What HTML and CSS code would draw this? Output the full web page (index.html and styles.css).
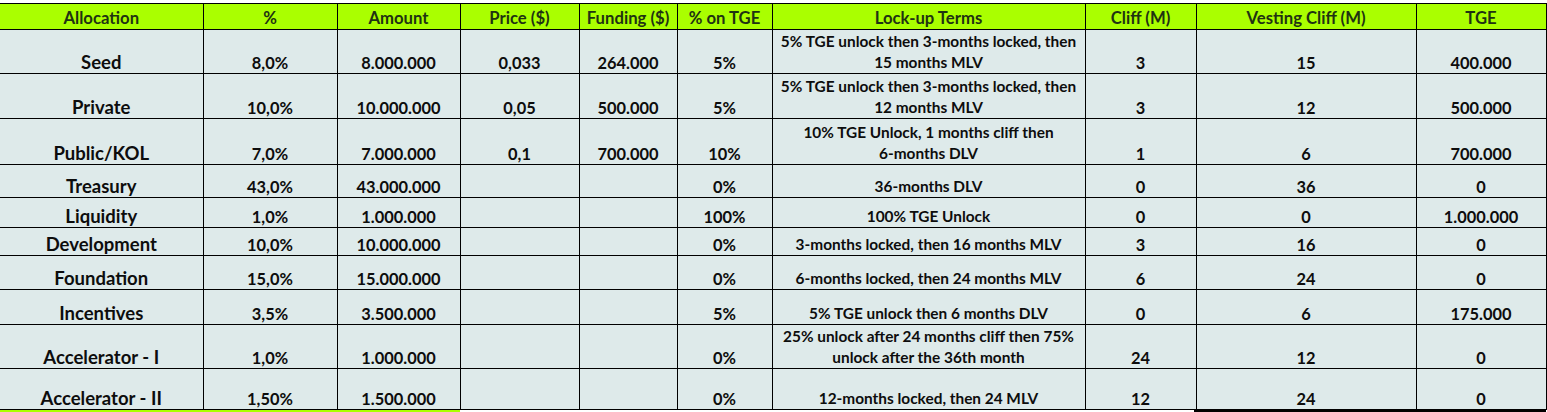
FILE: index.html
```html
<!DOCTYPE html>
<html>
<head>
<meta charset="utf-8">
<link rel="stylesheet" href="styles.css">
</head>
<body>
<div class="sheet">
<table class="alloc">
<colgroup>
<col class="c1"><col class="c2"><col class="c3"><col class="c4"><col class="c5"><col class="c6"><col class="c7"><col class="c8"><col class="c9"><col class="c10">
</colgroup>
<thead>
<tr class="hdr">
<th>Allocation</th><th>%</th><th>Amount</th><th>Price ($)</th><th>Funding ($)</th><th>% on TGE</th><th>Lock-up Terms</th><th>Cliff (M)</th><th>Vesting Cliff (M)</th><th>TGE</th>
</tr>
</thead>
<tbody>
<tr class="r-seed"><td class="name">Seed</td><td>8,0%</td><td>8.000.000</td><td>0,033</td><td>264.000</td><td>5%</td><td class="terms">5% TGE unlock then 3-months locked, then<br>15 months MLV</td><td>3</td><td>15</td><td>400.000</td></tr>
<tr class="r-private"><td class="name">Private</td><td>10,0%</td><td>10.000.000</td><td>0,05</td><td>500.000</td><td>5%</td><td class="terms">5% TGE unlock then 3-months locked, then<br>12 months MLV</td><td>3</td><td>12</td><td>500.000</td></tr>
<tr class="r-public"><td class="name">Public/KOL</td><td>7,0%</td><td>7.000.000</td><td>0,1</td><td>700.000</td><td>10%</td><td class="terms">10% TGE Unlock, 1 months cliff then<br>6-months DLV</td><td>1</td><td>6</td><td>700.000</td></tr>
<tr class="r-treasury"><td class="name">Treasury</td><td>43,0%</td><td>43.000.000</td><td></td><td></td><td>0%</td><td class="terms">36-months DLV</td><td>0</td><td>36</td><td>0</td></tr>
<tr class="r-liquidity"><td class="name">Liquidity</td><td>1,0%</td><td>1.000.000</td><td></td><td></td><td>100%</td><td class="terms">100% TGE Unlock</td><td>0</td><td>0</td><td>1.000.000</td></tr>
<tr class="r-dev"><td class="name">Development</td><td>10,0%</td><td>10.000.000</td><td></td><td></td><td>0%</td><td class="terms">3-months locked, then 16 months MLV</td><td>3</td><td>16</td><td>0</td></tr>
<tr class="r-found"><td class="name">Foundation</td><td>15,0%</td><td>15.000.000</td><td></td><td></td><td>0%</td><td class="terms">6-months locked, then 24 months MLV</td><td>6</td><td>24</td><td>0</td></tr>
<tr class="r-inc"><td class="name">Incentives</td><td>3,5%</td><td>3.500.000</td><td></td><td></td><td>5%</td><td class="terms">5% TGE unlock then 6 months DLV</td><td>0</td><td>6</td><td>175.000</td></tr>
<tr class="r-acc1"><td class="name">Accelerator - I</td><td>1,0%</td><td>1.000.000</td><td></td><td></td><td>0%</td><td class="terms">25% unlock after 24 months cliff then 75%<br>unlock after the 36th month</td><td>24</td><td>12</td><td>0</td></tr>
<tr class="r-acc2"><td class="name">Accelerator - II</td><td>1,50%</td><td>1.500.000</td><td></td><td></td><td>0%</td><td class="terms">12-months locked, then 24 MLV</td><td>12</td><td>24</td><td>0</td></tr>
</tbody>
</table>
<div class="tail">
<div class="tail-green"></div>
<div class="tail-white"></div>
<div class="tail-black"></div>
</div>
</div>
</body>
</html>
```
FILE: styles.css
```css
html, body {
  margin: 0;
  padding: 0;
  background: #ffffff;
}
.sheet {
  width: 1547px;
  padding-top: 3px;
}
.alloc {
  border-collapse: collapse;
  table-layout: fixed;
  width: 1546px;
  font-family: Lato, "Open Sans", sans-serif;
  font-weight: 700;
  font-size: 16.4px;
  color: #0d0d0d;
}
.c1 { width: 203px; }
.c2 { width: 134px; }
.c3 { width: 123px; }
.c4 { width: 119px; }
.c5 { width: 98px; }
.c6 { width: 95px; }
.c7 { width: 313px; }
.c8 { width: 111px; }
.c9 { width: 220px; }
.c10 { width: 130px; }
.alloc th,
.alloc td {
  border: 1px solid #000000;
  padding: 0 2px 0 2px;
  text-align: center;
  line-height: 21px;
  overflow: hidden;
  white-space: nowrap;
}
.alloc th:first-child,
.alloc td:first-child {
  border-left: none;
}
.alloc th {
  background: #aaff00;
  color: #1f3312;
  vertical-align: bottom;
  height: 25px;
  font-size: 16.7px;
  line-height: 22px;
}
.alloc td {
  background: #deeaea;
  vertical-align: bottom;
}
.alloc td.name {
  font-size: 18.5px;
}
.alloc td.terms {
  font-size: 15.4px;
}
.r-seed td { height: 43px; }
.r-private td { height: 44px; }
.r-public td { height: 45px; }
.r-treasury td { height: 32px; }
.r-liquidity td { height: 29px; }
.r-dev td { height: 27px; }
.r-found td { height: 33px; }
.r-inc td { height: 34px; }
.r-acc1 td { height: 43px; }
.r-acc2 td { height: 40px; }
.tail {
  display: flex;
  height: 4px;
}
.tail-green {
  width: 460px;
  background: #aaff00;
}
.tail-white {
  width: 734px;
  background: #ffffff;
}
.tail-black {
  width: 352px;
  background: #000000;
}
```
